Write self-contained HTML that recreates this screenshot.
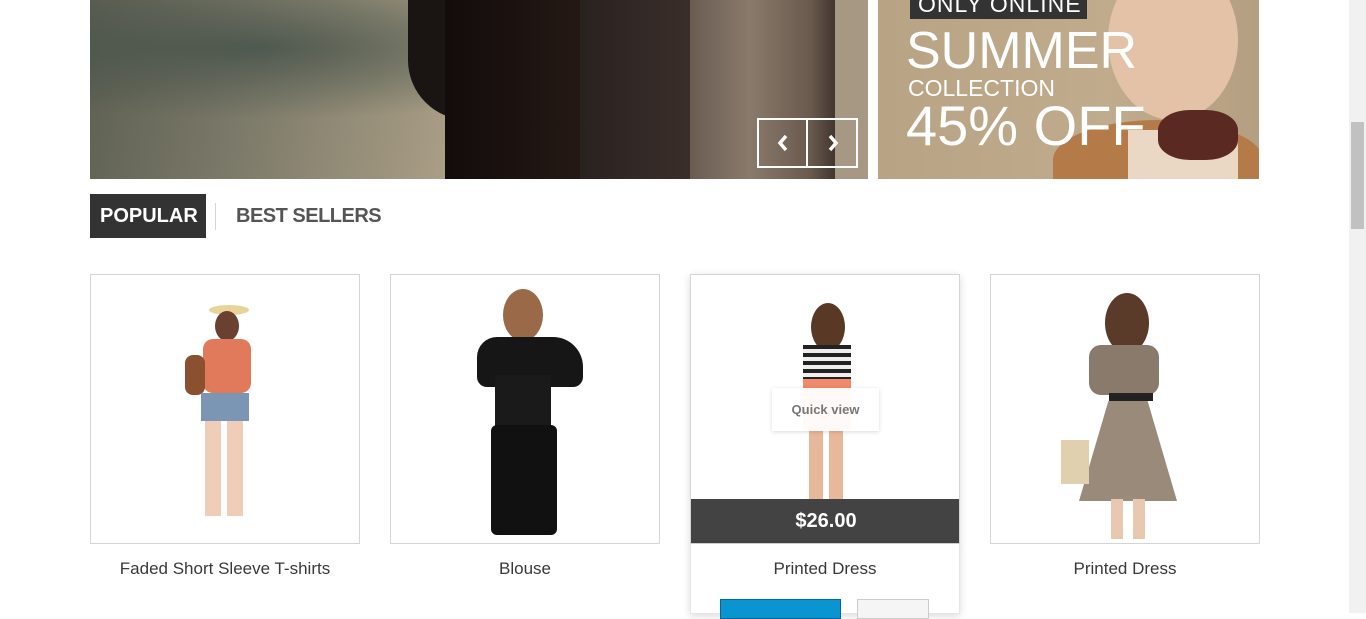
<!DOCTYPE html>
<html><head><meta charset="utf-8"><style>
*{margin:0;padding:0;box-sizing:border-box}
body{width:1366px;height:613px;overflow:hidden;background:#fff;font-family:"Liberation Sans",Arial,sans-serif;position:relative}
.abs{position:absolute}
.b1{left:90px;top:0;width:778px;height:179px;overflow:hidden;background:linear-gradient(100deg,#5d6052 0%,#7a7868 20%,#a59a82 45%,#c3b196 60%,#b7a58a 75%,#8a7660 100%)}
.b2{left:878px;top:0;width:381px;height:179px;overflow:hidden;background:linear-gradient(90deg,#b8a384,#c0ab8d 60%,#b59f82)}
.prod{top:274px;width:270px;height:270px;border:1px solid #d6d4d4;background:#fff;overflow:hidden}
.name{top:559px;width:270px;text-align:center;font-size:17px;color:#3a3939}
.tab{font-family:"Liberation Sans",sans-serif;font-weight:bold;font-size:20px}
.lt{color:#fff;font-family:"DejaVu Sans ExtraLight","Liberation Sans",sans-serif;font-weight:200}
</style></head><body>
<div class="abs b1">
 <div class="abs" style="left:0;top:0;width:560px;height:120px;background:radial-gradient(ellipse at 30% 40%,rgba(60,75,68,.7),rgba(0,0,0,0) 70%)"></div>
 <div class="abs" style="left:318px;top:0;width:115px;height:120px;background:#1a1412;border-radius:0 0 40px 60px"></div>
 <div class="abs" style="left:355px;top:0;width:250px;height:179px;background:linear-gradient(90deg,#120c0a,#261a16 60%,#1c1412)"></div>
 <div class="abs" style="left:490px;top:0;width:110px;height:179px;background:linear-gradient(90deg,#2a2220,#3a2e2a)"></div>
 <div class="abs" style="left:600px;top:0;width:150px;height:179px;background:linear-gradient(90deg,#6a5c52,#8a7a6c 40%,#6a5a4e 80%,#3a2e28)"></div>
 <div class="abs" style="left:745px;top:0;width:33px;height:179px;background:#a79884"></div>
 <div class="abs" style="left:667px;top:118px;width:101px;height:50px;border:2px solid #fff"></div>
 <div class="abs" style="left:716px;top:118px;width:2px;height:50px;background:#fff"></div>
 <svg class="abs" style="left:686px;top:133px" width="14" height="20"><path d="M10 3 L4 10 L10 17" stroke="#fff" stroke-width="3.5" fill="none"/></svg>
 <svg class="abs" style="left:736px;top:133px" width="14" height="20"><path d="M4 3 L10 10 L4 17" stroke="#fff" stroke-width="3.5" fill="none"/></svg>
</div>
<div class="abs b2">
 <div class="abs" style="left:230px;top:-40px;width:130px;height:160px;border-radius:50%;background:#e4c2a8"></div>
 <div class="abs" style="left:175px;top:120px;width:210px;height:80px;border-radius:50% 50% 0 0;background:#b47a48"></div>
 <div class="abs" style="left:250px;top:130px;width:110px;height:60px;background:#ead8c4"></div>
 <div class="abs" style="left:280px;top:110px;width:80px;height:50px;border-radius:40%;background:#5a2a22"></div>
 <div class="abs" style="left:32px;top:-10px;width:177px;height:29px;background:#333"></div>
 <div class="abs lt" style="left:40px;top:-10px;font-size:23px;letter-spacing:1px;line-height:28px">ONLY ONLINE</div>
 <div class="abs lt" style="left:28px;top:22px;font-size:52px;line-height:58px">SUMMER</div>
 <div class="abs lt" style="left:30px;top:74px;font-size:23px;line-height:28px">COLLECTION</div>
 <div class="abs lt" style="left:28px;top:94px;font-size:56px;line-height:64px">45% OFF</div>
</div>
<div class="abs" style="left:90px;top:194px;width:116px;height:44px;background:#333"></div>
<div class="abs tab" style="left:100px;top:205px;color:#fff">POPULAR</div>
<div class="abs" style="left:215px;top:203px;width:1px;height:27px;background:#d6d4d4"></div>
<div class="abs tab" style="left:236px;top:205px;color:#555;letter-spacing:-0.5px">BEST SELLERS</div>

<div class="abs prod" style="left:90px">
 <div class="abs" style="left:118px;top:30px;width:40px;height:10px;border-radius:50%;background:#e8d49a"></div>
 <div class="abs" style="left:124px;top:36px;width:24px;height:30px;border-radius:50%;background:#6a4030"></div>
 <div class="abs" style="left:112px;top:64px;width:48px;height:54px;background:#e07a5a;border-radius:10px"></div>
 <div class="abs" style="left:94px;top:80px;width:20px;height:40px;background:#8a5030;border-radius:8px"></div>
 <div class="abs" style="left:110px;top:118px;width:48px;height:28px;background:#7a96b4"></div>
 <div class="abs" style="left:114px;top:146px;width:16px;height:95px;background:#efcdb6"></div>
 <div class="abs" style="left:136px;top:146px;width:16px;height:95px;background:#efcdb6"></div>
</div>
<div class="abs name" style="left:90px">Faded Short Sleeve T-shirts</div>

<div class="abs prod" style="left:390px">
 <div class="abs" style="left:112px;top:14px;width:40px;height:52px;border-radius:50%;background:#9a6a48"></div>
 <div class="abs" style="left:86px;top:62px;width:106px;height:50px;background:#161616;border-radius:20px 30px 10px 10px"></div>
 <div class="abs" style="left:104px;top:100px;width:56px;height:60px;background:#1a1a1a"></div>
 <div class="abs" style="left:100px;top:150px;width:66px;height:110px;background:#111;border-radius:6px"></div>
</div>
<div class="abs name" style="left:390px">Blouse</div>

<div class="abs prod" style="left:690px;box-shadow:0 2px 8px rgba(0,0,0,.15)">
 <div class="abs" style="left:120px;top:28px;width:34px;height:48px;border-radius:50%;background:#5a3826"></div>
 <div class="abs" style="left:112px;top:70px;width:48px;height:34px;background:repeating-linear-gradient(180deg,#222 0 4px,#eee 4px 8px)"></div>
 <div class="abs" style="left:112px;top:104px;width:48px;height:50px;background:#f08a6a"></div>
 <div class="abs" style="left:118px;top:154px;width:14px;height:70px;background:#e8b89a"></div>
 <div class="abs" style="left:138px;top:154px;width:14px;height:70px;background:#e8b89a"></div>
 <div class="abs" style="left:81px;top:113px;width:107px;height:43px;background:rgba(255,255,255,.95);box-shadow:0 1px 4px rgba(0,0,0,.15);text-align:center;line-height:43px;font-weight:bold;font-size:13px;color:#777">Quick view</div>
 <div class="abs" style="left:0;top:224px;width:270px;height:45px;background:#434343;color:#fff;text-align:center;line-height:45px;font-weight:bold;font-size:20px">$26.00</div>
</div>
<div class="abs" style="left:690px;top:544px;width:270px;height:70px;background:#fff;box-shadow:0 2px 8px rgba(0,0,0,.15);border:1px solid #e6e6e6;border-top:none"></div>
<div class="abs name" style="left:690px">Printed Dress</div>
<div class="abs" style="left:720px;top:599px;width:121px;height:20px;background:#0b95d0;border:1px solid #06669a"></div>
<div class="abs" style="left:857px;top:599px;width:72px;height:20px;background:#f5f5f5;border:1px solid #ccc"></div>

<div class="abs prod" style="left:990px">
 <div class="abs" style="left:114px;top:18px;width:44px;height:60px;border-radius:50%;background:#5a3a28"></div>
 <div class="abs" style="left:98px;top:70px;width:70px;height:50px;background:#8a7a6c;border-radius:12px"></div>
 <div class="abs" style="left:118px;top:118px;width:44px;height:8px;background:#222"></div>
 <div class="abs" style="left:88px;top:126px;width:98px;height:100px;background:#9a8a7a;clip-path:polygon(30% 0,70% 0,100% 100%,0 100%)"></div>
 <div class="abs" style="left:70px;top:165px;width:28px;height:44px;background:#e0d0b0"></div>
 <div class="abs" style="left:120px;top:224px;width:12px;height:40px;background:#e8c8b0"></div>
 <div class="abs" style="left:142px;top:224px;width:12px;height:40px;background:#e8c8b0"></div>
</div>
<div class="abs name" style="left:990px">Printed Dress</div>

<div class="abs" style="left:1349px;top:0;width:17px;height:613px;background:#f1f1f1"></div>
<div class="abs" style="left:1351px;top:122px;width:13px;height:107px;background:#c1c1c1"></div>
</body></html>
